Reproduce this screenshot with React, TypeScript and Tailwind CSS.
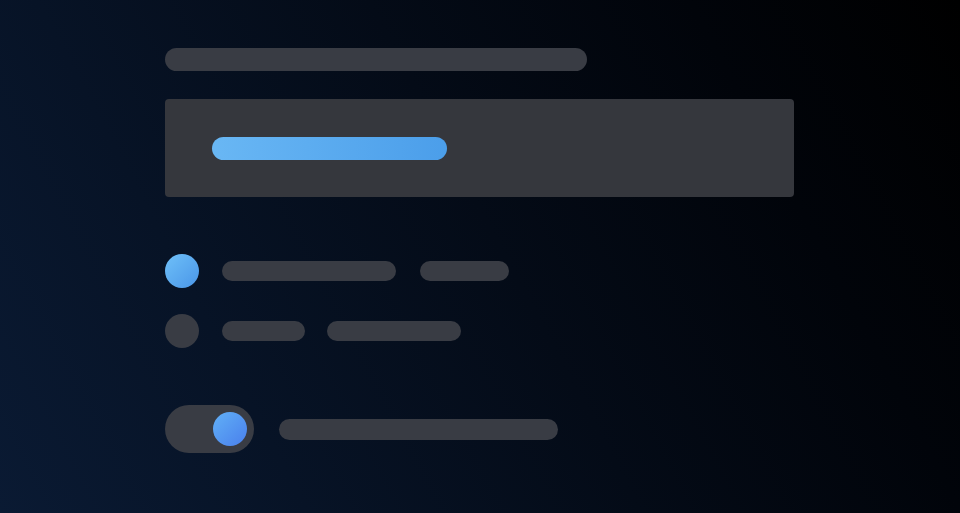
export default function App() {
  return (
    <div className="w-[960px] h-[513px] overflow-hidden bg-[linear-gradient(62deg,#0a1a33_0%,#071326_25%,#040b17_52%,#01040a_78%,#000000_100%)] pl-[165px] pt-[48px]">
      {/* title skeleton */}
      <div className="w-[422px] h-[23px] rounded-full bg-[#393c44]" />

      {/* panel */}
      <div className="mt-[28px] w-[629px] h-[98px] rounded-[4px] bg-[#35373d] pl-[47px] pt-[38px]">
        <div className="w-[235px] h-[23px] rounded-full bg-gradient-to-r from-[#69b7f4] to-[#4b9eea]" />
      </div>

      {/* list rows */}
      <div className="mt-[57px] flex flex-col gap-[26px]">
        <div className="flex items-center">
          <div className="w-[34px] h-[34px] rounded-full bg-gradient-to-br from-[#6fc0f8] to-[#4a96e8]" />
          <div className="ml-[23px] w-[174px] h-[20px] rounded-full bg-[#393c44]" />
          <div className="ml-[24px] w-[89px] h-[20px] rounded-full bg-[#393c44]" />
        </div>
        <div className="flex items-center">
          <div className="w-[34px] h-[34px] rounded-full bg-[#393c44]" />
          <div className="ml-[23px] w-[83px] h-[20px] rounded-full bg-[#393c44]" />
          <div className="ml-[22px] w-[134px] h-[20px] rounded-full bg-[#393c44]" />
        </div>
      </div>

      {/* toggle row */}
      <div className="mt-[57px] flex items-center">
        <div className="w-[89px] h-[48px] rounded-full bg-[#393c44] flex items-center justify-end pr-[7px]">
          <div className="w-[34px] h-[34px] rounded-full bg-gradient-to-br from-[#62b0f6] to-[#4a7fec]" />
        </div>
        <div className="ml-[25px] w-[279px] h-[21px] rounded-full bg-[#393c44]" />
      </div>
    </div>
  )
}
